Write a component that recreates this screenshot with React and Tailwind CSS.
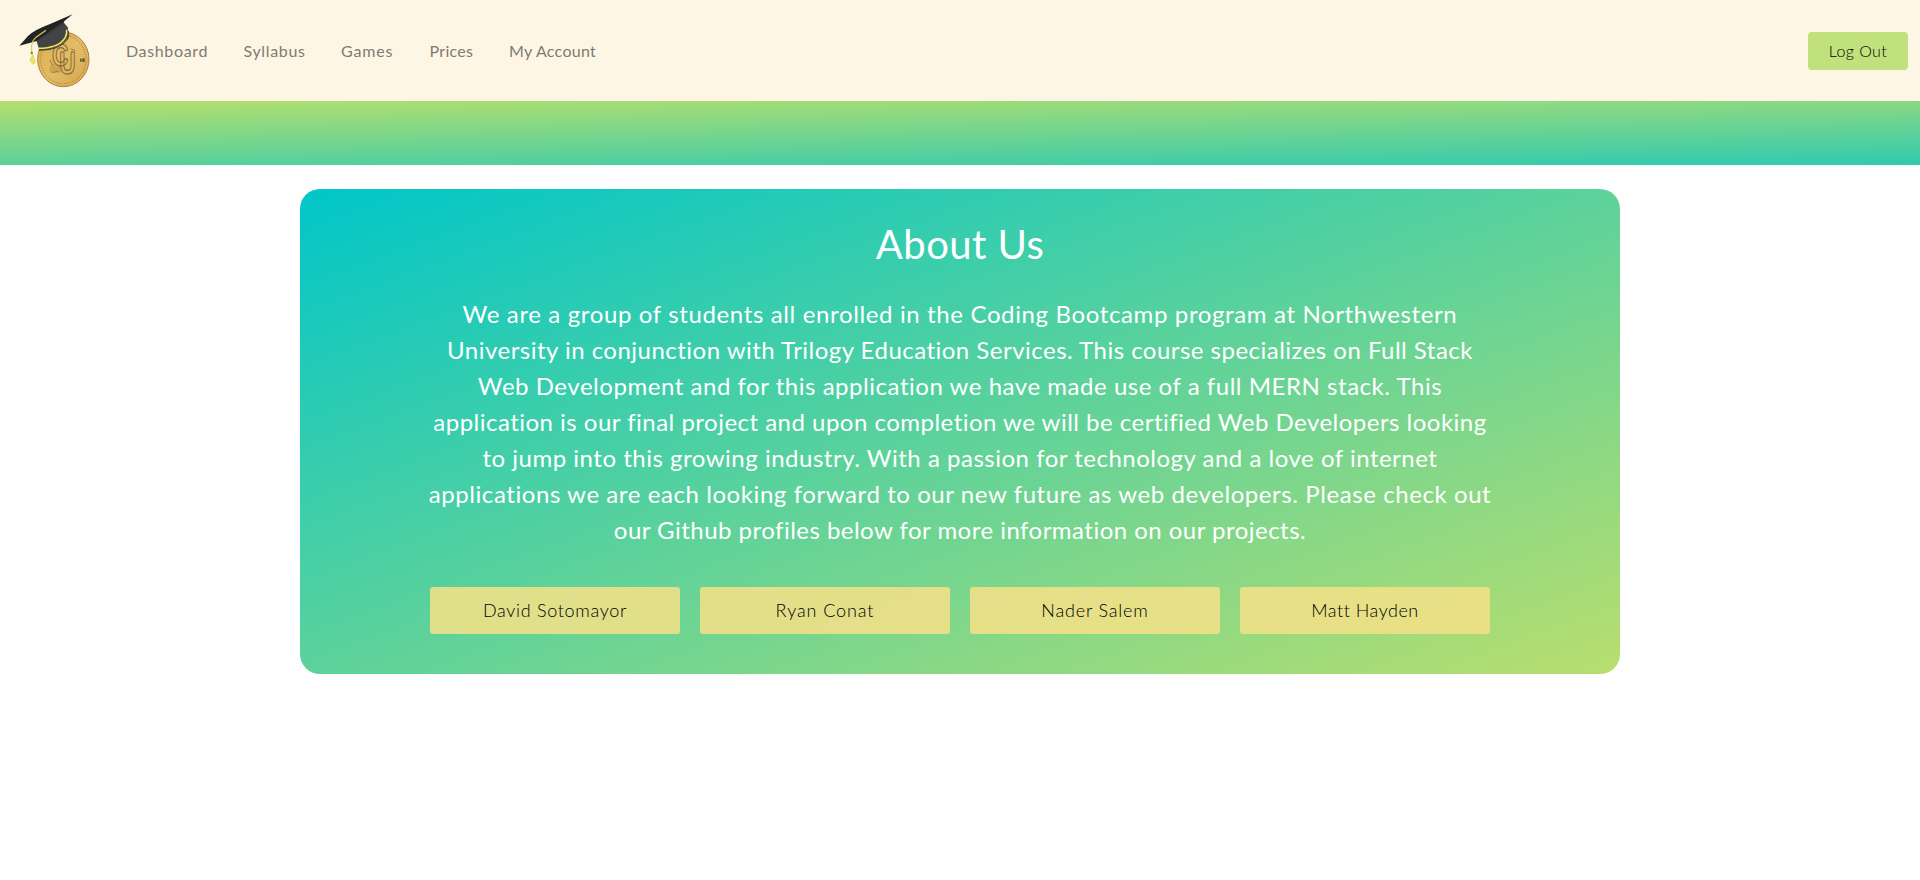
const navItems = [
  { label: "Dashboard", style: "w-[117.5px] tracking-[0.65px]" },
  { label: "Syllabus", style: "w-[97.5px] tracking-[0.65px]" },
  { label: "Games", style: "w-[88.5px] tracking-[0.84px]" },
  { label: "Prices", style: "w-[79.5px] tracking-[0.3px]" },
  { label: "My Account", style: "w-[90px] tracking-[0.28px]" },
];

const lines = [
  { text: "We are a group of students all enrolled in the Coding Bootcamp program at Northwestern", style: "tracking-[0.635px]" },
  { text: "University in conjunction with Trilogy Education Services. This course specializes on Full Stack", style: "tracking-[0.482px]" },
  { text: "Web Development and for this application we have made use of a full MERN stack. This", style: "tracking-[0.535px]" },
  { text: "application is our final project and upon completion we will be certified Web Developers looking", style: "tracking-[0.485px]" },
  { text: "to jump into this growing industry. With a passion for technology and a love of internet", style: "tracking-[0.51px]" },
  { text: "applications we are each looking forward to our new future as web developers. Please check out", style: "tracking-[0.58px]" },
  { text: "our Github profiles below for more information on our projects.", style: "tracking-[0.475px]" },
];

const people = [
  { name: "David Sotomayor", style: "tracking-[0.7px]" },
  { name: "Ryan Conat", style: "tracking-[0.9px]" },
  { name: "Nader Salem", style: "tracking-[0.83px]" },
  { name: "Matt Hayden", style: "tracking-[0.53px]" },
];

function Logo() {
  return (
    <svg className="h-[101px] w-[120px] shrink-0" viewBox="0 0 360 303" aria-hidden="true">
      <defs>
        <linearGradient id="coin" x1="0" y1="0" x2="1" y2="1">
          <stop offset="0" stopColor="#d9a84a" />
          <stop offset="0.5" stopColor="#e4bc66" />
          <stop offset="1" stopColor="#d5a54a" />
        </linearGradient>
      </defs>
      <ellipse cx="190" cy="178" rx="77" ry="82" fill="url(#coin)" stroke="#a88140" strokeWidth="3" />
      <ellipse cx="190" cy="178" rx="68" ry="73" fill="none" stroke="#80683a" strokeWidth="2.5" strokeDasharray="3 5" />
      <path d="M148 200l14-10 12 10 8-6 6 18-12 8-14-4-12 4z" fill="#b68b3b" opacity="0.5" />
      <path d="M158 218l18-5M150 180l8 16M212 146l14 6" stroke="#97794a" strokeWidth="3" fill="none" />
      <text fontFamily="Liberation Sans, sans-serif" fontWeight="bold" fontSize="92" fill="none" stroke="#80683a" strokeWidth="3.5" strokeLinejoin="round" transform="scale(0.74 1)">
        <tspan x="211" y="198">C</tspan>
        <tspan x="240" y="221">U</tspan>
      </text>
      <path d="M240 176h5v9h-5zM247 175h7v11h-7z" fill="#65573a" />
      <path d="M103 103L118 150Q176 150 203 114Q208 102 203 82L190 66Z" fill="#424345" />
      <path d="M114 145Q177 145 196 112Q202 101 200 89" fill="none" stroke="#f0e658" strokeWidth="5" />
      <path d="M117 151Q180 151 203 117Q209 105 204 92" fill="none" stroke="#39372f" strokeWidth="3" />
      <path d="M108 124L186 79Q196 73 190 62L112 100Z" fill="#3c3d3f" />
      <path d="M58 137L84 108Q101 90 145 74L218 43L190 66L108 124Z" fill="#222325" />
      <path d="M138 91L108 112Q96 122 95 137L95 160" fill="none" stroke="#d8ce50" strokeWidth="3.5" />
      <path d="M92 155h6l1 8h-7z" fill="#8a8641" />
      <path d="M91 178L98 164L106 186L99 193L89 181Z" fill="#f0e65a" stroke="#c7bd49" strokeWidth="1.5" />
    </svg>
  );
}

export default function App() {
  return (
    <div className="min-h-[880px] bg-white font-['Lato',sans-serif]">
      <header className="flex h-[101px] items-center bg-[#fef6e4] pr-3">
        <Logo />
        <nav className="flex pl-[6px] text-base leading-6 text-[#7f7b72]">
          {navItems.map(({ label, style }) => (
            <a key={label} href="#" className={`whitespace-nowrap ${style}`}>{label}</a>
          ))}
        </nav>
        <button className="ml-auto h-[38px] w-[100px] rounded bg-[#c1e17c] text-base font-light tracking-[0.4px] text-black">
          Log Out
        </button>
      </header>
      <div className="h-16 bg-[linear-gradient(179.07deg,#b4df6e,#30cab0)]" />
      <main className="mx-auto mt-6 h-[485px] w-[1320px] rounded-[20px] bg-[linear-gradient(to_bottom_right,#00c6c8,#b9de6e)] pt-[31px] text-center text-white">
        <h1 className="text-[40px] leading-[48px] tracking-[0.45px]">About Us</h1>
        <p className="mt-[28px] text-2xl leading-9">
          {lines.map(({ text, style }) => (
            <span key={text} className={`block whitespace-nowrap ${style}`}>{text}</span>
          ))}
        </p>
        <div className="mt-[39px] flex justify-center gap-5">
          {people.map(({ name, style }) => (
            <a key={name} href="#" className={`h-[47px] w-[250px] rounded-[3px] bg-[#f2e088]/88 text-lg leading-[47px] font-light text-black ${style}`}>{name}</a>
          ))}
        </div>
      </main>
    </div>
  );
}
